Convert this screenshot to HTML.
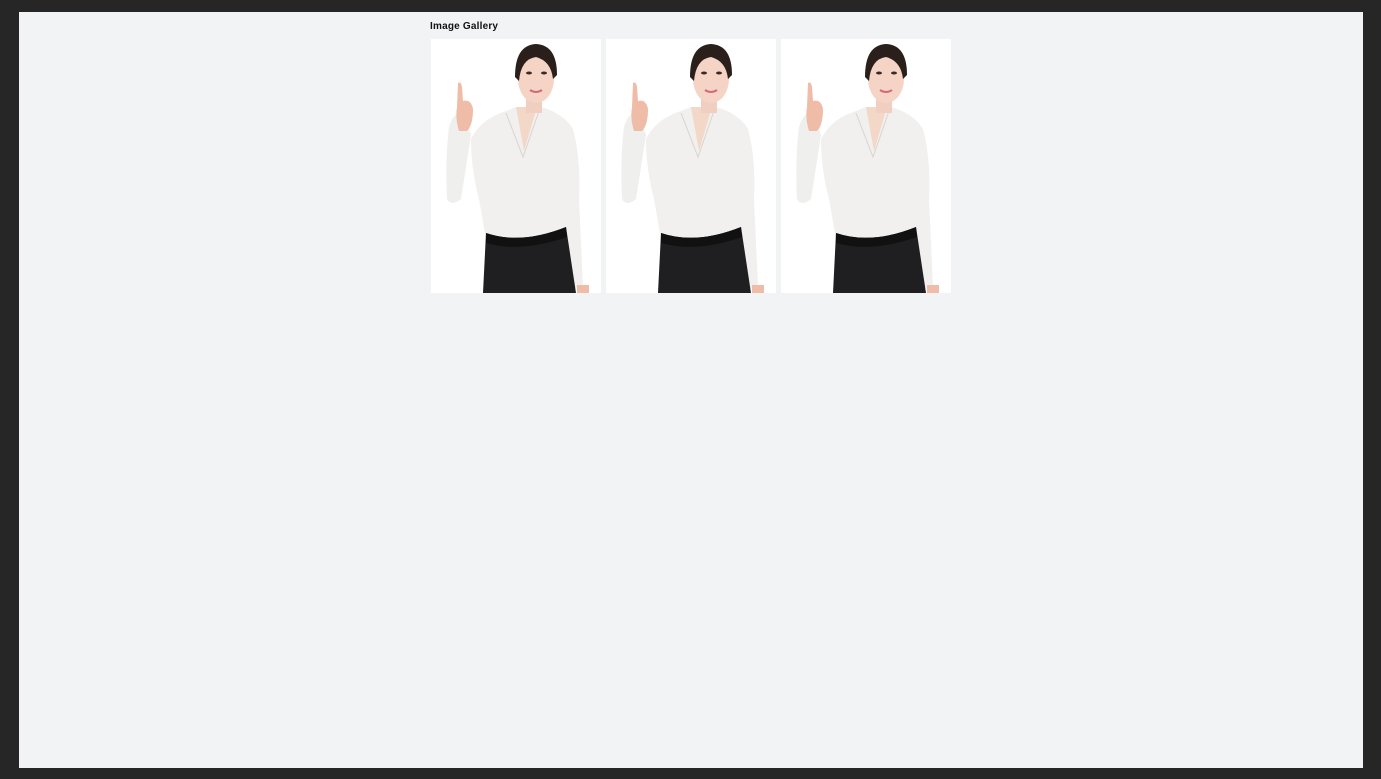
<!DOCTYPE html>
<html><head><meta charset="utf-8"><style>
html,body{margin:0;padding:0}
body{width:1381px;height:779px;background:#262626;position:relative;overflow:hidden;font-family:"Liberation Sans",sans-serif}
.inner{position:absolute;left:19px;top:12px;width:1344px;height:756px;background:#f2f3f5}
h1{position:absolute;left:430px;top:21px;margin:0;font-size:10px;font-weight:bold;color:#111;letter-spacing:0.2px}
.img{position:absolute;top:39px;width:170px;height:254px;background:#fff}
</style></head><body>
<div class="inner"></div>
<h1>Image Gallery</h1>
<svg width="0" height="0" style="position:absolute"><defs>
<g id="w">
<rect width="170" height="254" fill="#fff"/>
<path d="M18 88 Q22 74 32 72 L40 96 L30 160 Q20 168 16 160 Q14 120 18 88Z" fill="#efefee"/>
<path d="M27 44 Q30 42 31 48 L32 62 Q40 60 42 70 Q42 86 36 92 L28 92 Q24 80 26 68 Z" fill="#efbca8"/>
<path d="M40 100 Q50 80 75 72 L85 68 L110 68 Q132 74 142 90 Q150 120 148 160 L152 248 L140 250 L135 200 Q110 210 90 208 Q70 206 55 200 L48 160 Q40 130 40 100Z" fill="#f1f0ef"/>
<path d="M75 74 L92 118 L108 72" fill="none" stroke="#d8d4d0" stroke-width="1"/>
<path d="M85 68 L93 112 L106 68Z" fill="#f3d7c7"/>
<path d="M55 194 Q90 206 135 188 L145 254 L52 254 Z" fill="#1f1f22"/>
<path d="M55 194 Q90 206 135 188 L136 198 Q90 214 55 204Z" fill="#111"/>
<rect x="95" y="52" width="16" height="22" fill="#f0cfc0"/>
<ellipse cx="105" cy="40" rx="18" ry="24" fill="#f5d3c5"/>
<path d="M84 38 Q84 6 105 5 Q126 6 126 36 L122 40 Q120 22 105 18 Q90 20 88 42Z" fill="#2b1f1c"/>
<ellipse cx="98" cy="34" rx="3" ry="1.5" fill="#3a2a25"/>
<ellipse cx="113" cy="34" rx="3" ry="1.5" fill="#3a2a25"/>
<path d="M99 51 Q105 55 111 51" stroke="#d36b7a" stroke-width="2" fill="none"/>
<rect x="146" y="246" width="12" height="8" fill="#efbca8"/>
</g></defs></svg>
<svg class="img" style="left:431px" viewBox="0 0 170 254"><use href="#w"/></svg>
<svg class="img" style="left:606px" viewBox="0 0 170 254"><use href="#w"/></svg>
<svg class="img" style="left:781px" viewBox="0 0 170 254"><use href="#w"/></svg>
</body></html>
